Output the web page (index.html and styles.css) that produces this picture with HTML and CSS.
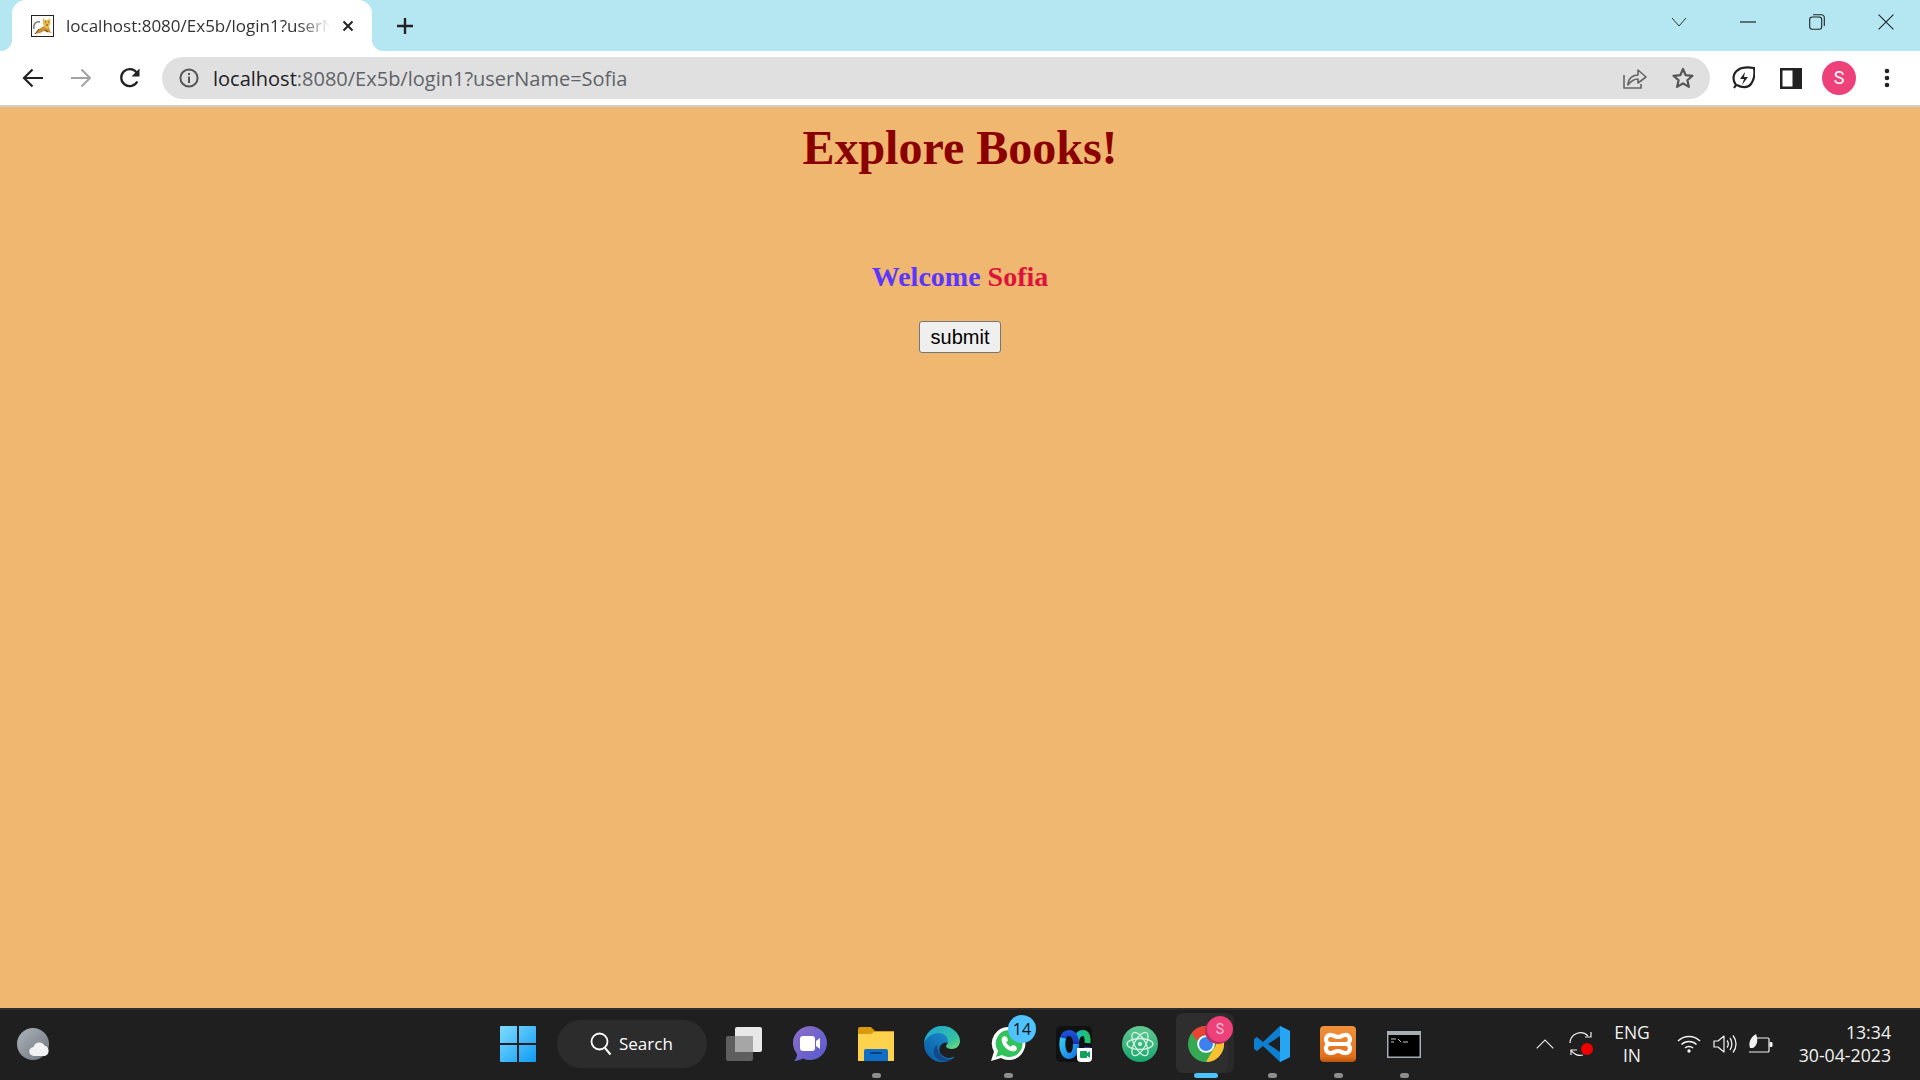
FILE: index.html
```html
<!DOCTYPE html>
<html lang="en">
<head>
<meta charset="utf-8">
<title>Explore Books</title>
<link rel="stylesheet" href="styles.css">
</head>
<body>
<div class="screen">
  <header class="tabstrip">
    <div class="tab">
      <svg class="favicon" width="23" height="22" viewBox="0 0 23 22"><rect x=".5" y=".5" width="22" height="21" fill="#fff" stroke="#222"/><path d="M3 14C2 9 5 6 9 7" fill="none" stroke="#777" stroke-width="1.400"/><path d="M4 19l4-5 5-3 5 1 1 4 2 2-5-1-3-1-4 2z" fill="#c98f33"/><path d="M12 3l2 2h3l2-2 .5 5-2.500 6-3-1-2-4z" fill="#e8b94a"/><path d="M14 7h1M17 7h1M15 10h2" stroke="#6a4a14" stroke-width="1"/><path d="M8 14l-4 5M14 15l3 2" stroke="#5a3d10" stroke-width="1"/></svg>
      <span class="tab-title">localhost:8080/Ex5b/login1?userN</span>
      <svg class="tab-close" width="12" height="12" viewBox="0 0 12 12"><path d="M1.500 1.500l9 9M10.500 1.500l-9 9" stroke="#222" stroke-width="2" fill="none"/></svg>
    </div>
    <svg class="new-tab" width="18" height="18" viewBox="0 0 18 18"><path d="M9 1v16M1 9h16" stroke="#222" stroke-width="2.400" fill="none"/></svg>
    <div class="win-controls">
      <span class="win-btn"><svg width="16" height="10" viewBox="0 0 16 10"><path d="M1 1l7 8 7-8" fill="none" stroke="#333" stroke-width="1"/></svg></span>
      <span class="win-btn"><svg width="16" height="2" viewBox="0 0 16 2"><path d="M0 1h16" stroke="#222" stroke-width="1.200"/></svg></span>
      <span class="win-btn"><svg width="16" height="16" viewBox="0 0 16 16"><rect x=".7" y="3" width="12" height="12.300" rx="2.500" fill="none" stroke="#222" stroke-width="1.100"/><path d="M4 .8h8.500a2.800 2.800 0 0 1 2.800 2.800V12" fill="none" stroke="#222" stroke-width="1.100"/></svg></span>
      <span class="win-btn"><svg width="16" height="16" viewBox="0 0 16 16"><path d="M.6.6l14.800 14.800M15.400.6L.6 15.400" stroke="#222" stroke-width="1.100" fill="none"/></svg></span>
    </div>
  </header>

  <nav class="toolbar">
    <div class="nav-group">
      <span class="tool"><svg width="22" height="20" viewBox="0 0 22 20"><path d="M21 10H2M10.500 1.500L2 10l8.500 8.500" fill="none" stroke="#222" stroke-width="2.200"/></svg></span>
      <span class="tool tool-fwd"><svg width="22" height="20" viewBox="0 0 22 20"><path d="M1 10h19M11.500 1.500L20 10l-8.500 8.500" fill="none" stroke="#a3a3a3" stroke-width="2"/></svg></span>
      <span class="tool"><svg width="22" height="22" viewBox="0 0 22 22"><path d="M18.300 14.500A8.500 8.500 0 1 1 17.500 5.400" fill="none" stroke="#222" stroke-width="2.300"/><path d="M20.500 1.500v8h-8z" fill="#222"/></svg></span>
    </div>
    <div class="omnibox">
      <svg class="info" width="20" height="20" viewBox="0 0 20 20"><circle cx="10" cy="10" r="8.600" fill="none" stroke="#555" stroke-width="2"/><path d="M10 8.500V15M10 5v2" stroke="#555" stroke-width="2" fill="none"/></svg>
      <span class="url"><span class="url-host">localhost</span>:8080/Ex5b/login1?userName=Sofia</span>
      <svg class="omni-share" width="24" height="23" viewBox="0 0 24 23"><path d="M1 9v13h17v-4" fill="none" stroke="#666" stroke-width="1.600"/><path d="M5 19c0-6 4-10 10-10V4l8 7-8 6v-4c-4 0-7 2-10 6z" fill="none" stroke="#666" stroke-width="1.600" stroke-linejoin="round"/></svg>
      <svg class="omni-star" width="22" height="22" viewBox="0 0 22 22"><path d="M11 2l2.700 6.200 6.800.6-5.100 4.500 1.500 6.600L11 16.400l-5.900 3.500 1.500-6.600L1.500 8.800l6.800-.6z" fill="none" stroke="#555" stroke-width="2.200" stroke-linejoin="round"/></svg>
    </div>
    <div class="ext-group">
      <span class="ext"><svg width="23" height="24" viewBox="0 0 23 24"><path d="M2 22l2-3C0 14 1 7 6 4c4-3 10-3 16-2 1 6 0 12-3 16-3 4-9 4-14 1" fill="none" stroke="#222" stroke-width="2.200"/><path d="M13 6l-5 7h4l-2 6 6-8h-4z" fill="#222"/></svg></span>
      <span class="ext"><svg width="22" height="21" viewBox="0 0 22 21"><rect width="22" height="21" fill="#222"/><rect x="2.500" y="2.500" width="10" height="16" fill="#fff"/></svg></span>
      <span class="ext"><span class="avatar">S</span></span>
      <span class="ext"><svg width="6" height="20" viewBox="0 0 6 20"><circle cx="3" cy="3" r="2.300" fill="#222"/><circle cx="3" cy="10" r="2.300" fill="#222"/><circle cx="3" cy="17" r="2.300" fill="#222"/></svg></span>
    </div>
  </nav>

  <main class="page">
    <h1 class="title">Explore Books!</h1>
    <h2 class="welcome">Welcome <span class="name">Sofia</span></h2>
    <button class="submit" type="button">submit</button>
  </main>

  <footer class="taskbar">
    <div class="tb-left">
      <svg width="34" height="32" viewBox="0 0 34 32"><defs><linearGradient id="wx" x1="0" y1="0" x2="1" y2="1"><stop offset="0" stop-color="#aeb4bb"/><stop offset="1" stop-color="#6d747c"/></linearGradient></defs><circle cx="16" cy="16" r="16" fill="url(#wx)"/><path d="M17 28a4.500 4.500 0 0 1-.500-9 6 6 0 0 1 11-1.500A5.500 5.500 0 0 1 28 28z" fill="#f1f2f4"/></svg>
    </div>
    <div class="tb-center">
      <span class="cell"><svg width="36" height="36" viewBox="0 0 36 36"><defs><linearGradient id="win" x1="0" y1="0" x2="1" y2="1"><stop offset="0" stop-color="#7fdcff"/><stop offset="1" stop-color="#0f9bf5"/></linearGradient></defs><path d="M0 1a1 1 0 0 1 1-1h16v17H0zM19 0h16a1 1 0 0 1 1 1v16H19zM0 19h17v17H1a1 1 0 0 1-1-1zM19 19h17v16a1 1 0 0 1-1 1H19z" fill="url(#win)"/></svg></span>
      <span class="search"><svg width="22" height="24" viewBox="0 0 22 24"><circle cx="9.500" cy="9.500" r="8" fill="none" stroke="#fff" stroke-width="1.800"/><path d="M15 16l5.500 6.500" stroke="#fff" stroke-width="2"/></svg><span class="search-text">Search</span></span>
      <span class="cell"><svg width="36" height="34" viewBox="0 0 36 34"><rect y="9" width="27" height="25" rx="2" fill="#5e5e5e"/><rect x="9" width="27" height="25" rx="2" fill="#e8e8e8"/><rect x="9" y="9" width="18" height="16" fill="#a6a6a6"/></svg></span>
      <span class="cell"><svg width="34" height="36" viewBox="0 0 34 36"><defs><linearGradient id="meet" x1="0" y1="0" x2="1" y2="1"><stop offset="0" stop-color="#8d6fc7"/><stop offset="1" stop-color="#5559d0"/></linearGradient></defs><path d="M17 0a17 17 0 1 1-7 32.500C7 34 4 35 1 35c2-2 3-4 3-7A17 17 0 0 1 17 0z" fill="url(#meet)"/><rect x="7" y="10" width="15" height="15" rx="3" fill="#fff"/><path d="M23 15l4-3v11l-4-3z" fill="#fff"/></svg></span>
      <span class="cell running"><svg width="36" height="34" viewBox="0 0 36 34"><path d="M0 2a2 2 0 0 1 2-2h11l4 4h19v30H0z" fill="#d99a0e"/><path d="M0 7h13l3-2h20v28a1 1 0 0 1-1 1H1a1 1 0 0 1-1-1z" fill="#ffd24d"/><path d="M6 34V24a2 2 0 0 1 2-2h20a2 2 0 0 1 2 2v10z" fill="#0f6ec5"/><rect x="12" y="25" width="12" height="2" rx="1" fill="#0a3f80"/></svg></span>
      <span class="cell"><svg width="36" height="36" viewBox="0 0 36 36"><defs><linearGradient id="edgeA" x1="0" y1="1" x2="1" y2="0"><stop offset="0" stop-color="#0c59a4"/><stop offset="1" stop-color="#1e9ad8"/></linearGradient><linearGradient id="edgeB" x1="0" y1="0" x2="1" y2="1"><stop offset="0" stop-color="#1ba5d8"/><stop offset=".7" stop-color="#35c1a1"/><stop offset="1" stop-color="#7ce36b"/></linearGradient></defs><path d="M18 0a18 18 0 1 0 9 33.600c2-1 3-2 3.500-3-4 2-9 2-12-1-4-3-4-8-1-11 2-2 5-3 8-1 3 1 8 1 10-2A18 18 0 0 0 18 0z" fill="url(#edgeA)"/><path d="M0 16C2 7 9 0 18 0c11 0 18 8 18 15 0 5-4 8-8 8-3 0-6-1-6-3 0-1 2-2 2-5 0-5-5-8-10-8C9 7 3 11 0 16z" fill="url(#edgeB)"/><path d="M13 19c0 8 6 15 14 14-6 4-15 2-17-5-1-4 0-7 3-9z" fill="#114a8b"/></svg></span>
      <span class="cell running"><span class="wa"><svg width="36" height="36" viewBox="0 0 36 36"><path d="M19 1a16.500 16.500 0 1 1-8 31L1 35l3-9.500A16.500 16.500 0 0 1 19 1z" fill="#fff"/><path d="M19 4a13.500 13.500 0 1 1-7 25l-6 2 2-6A13.500 13.500 0 0 1 19 4z" fill="#32c25a"/><path d="M14 10c-2 1-3 3-2 6 1 4 5 8 9 9 3 1 5 0 6-2l-1-3-4-1-1 2c-2-1-4-3-5-5l2-1-1-4z" fill="#fff"/></svg><span class="badge">14</span></span></span>
      <span class="cell"><svg width="36" height="36" viewBox="0 0 36 36"><defs><linearGradient id="wb1" x1="0" y1="0" x2="0" y2="1"><stop offset="0" stop-color="#1d4fd8"/><stop offset="1" stop-color="#1a2fb0"/></linearGradient><linearGradient id="wb2" x1="0" y1="0" x2="1" y2="1"><stop offset="0" stop-color="#32c8ef"/><stop offset="1" stop-color="#1677e8"/></linearGradient><linearGradient id="wb3" x1="0" y1="0" x2="1" y2="0"><stop offset="0" stop-color="#14b4c8"/><stop offset="1" stop-color="#22c46a"/></linearGradient></defs><rect width="36" height="36" rx="5" fill="#111"/><path d="M20 18c0 6 1 10 5 10s6-3 6.500-7" fill="none" stroke="url(#wb1)" stroke-width="6"/><path d="M20 18c0-7 3-11 7-11s5 5 4.500 10" fill="none" stroke="url(#wb3)" stroke-width="6"/><path d="M7 14c0-5 3-7 6-7 5 0 7 5 7 11" fill="none" stroke="url(#wb1)" stroke-width="6"/><path d="M7 12c-2 10 1 18 6 18s7-6 7-12" fill="none" stroke="url(#wb2)" stroke-width="6"/><path d="M21 22h15v10a4 4 0 0 1-4 4H25a4 4 0 0 1-4-4z" fill="#fff"/><rect x="24" y="25" width="7" height="7" rx="1" fill="#12a05c"/><path d="M31 27l3-2v7l-3-2z" fill="#12a05c"/></svg></span>
      <span class="cell"><svg width="36" height="36" viewBox="0 0 36 36"><defs><linearGradient id="atom" x1="0" y1="0" x2="0" y2="1"><stop offset="0" stop-color="#63c893"/><stop offset="1" stop-color="#17a56c"/></linearGradient></defs><circle cx="18" cy="18" r="18" fill="url(#atom)"/><g fill="none" stroke="#d6f3e3" stroke-width="1.300"><ellipse cx="18" cy="18" rx="13" ry="5.500"/><ellipse cx="18" cy="18" rx="13" ry="5.500" transform="rotate(60 18 18)"/><ellipse cx="18" cy="18" rx="13" ry="5.500" transform="rotate(120 18 18)"/></g><circle cx="18" cy="18" r="2" fill="#d6f3e3"/></svg></span>
      <span class="cell active"><span class="chrome"><svg width="36" height="36" viewBox="0 0 36 36"><circle cx="18" cy="18" r="18" fill="#34a853"/><path d="M18 0a18 18 0 0 1 15.600 9H18a9 9 0 0 0-8.500 6L3.500 7.200A18 18 0 0 1 18 0z" fill="#ea4335"/><path d="M33.600 9A18 18 0 0 1 18 36l7.800-13.500A9 9 0 0 0 25 9z" fill="#fbc02d"/><circle cx="18" cy="18" r="8.800" fill="#fff"/><circle cx="18" cy="18" r="7" fill="#3b82f0"/></svg><span class="chrome-badge">S</span></span></span>
      <span class="cell running"><svg width="36" height="36" viewBox="0 0 36 36"><path d="M26 0l10 5v26l-10 5L9 20l-6 5-3-2v-10l3-2 6 5z" fill="#0e7fcf"/><path d="M26 0l10 5v26l-10 5z" fill="#24a6f2"/><path d="M26 10L14 18l12 8z" fill="#1f1f1f"/></svg></span>
      <span class="cell running"><svg width="36" height="36" viewBox="0 0 36 36"><defs><linearGradient id="xa" x1="0" y1="0" x2="0" y2="1"><stop offset="0" stop-color="#f0903a"/><stop offset=".85" stop-color="#e4701c"/><stop offset="1" stop-color="#b9560f"/></linearGradient></defs><rect width="36" height="36" rx="4" fill="url(#xa)"/><path d="M18 11c-3 0-4-2-7-2a4.500 4.500 0 0 0-1 9 4.500 4.500 0 0 0 1 9c3 0 4-2 7-2s4 2 7 2a4.500 4.500 0 0 0 1-9 4.500 4.500 0 0 0-1-9c-3 0-4 2-7 2zM10 18h16" fill="none" stroke="#fff" stroke-width="4.200" stroke-linejoin="round"/></svg></span>
      <span class="cell running"><svg width="34" height="27" viewBox="0 0 34 27"><rect width="34" height="27" fill="#a6acb3"/><rect x="1.500" y="4" width="31" height="21.500" fill="#000"/><path d="M4 8h5M4 11h3M11 8l3 3M16 11h5" stroke="#c8c8c8" stroke-width="1" fill="none"/></svg></span>
    </div>
    <div class="tray">
      <svg class="tray-chevron" width="18" height="10" viewBox="0 0 18 10"><path d="M.7 9.300L9 1l8.300 8.300" fill="none" stroke="#e8e8e8" stroke-width="1.200"/></svg>
      <svg class="tray-sync" width="26" height="26" viewBox="0 0 26 26"><path d="M1 12A10.500 10.500 0 0 1 19 5" fill="none" stroke="#eee" stroke-width="1.200"/><path d="M22 1v5h-6M2 24v-5h6" fill="none" stroke="#eee" stroke-width="1.200"/><path d="M2 19a10.500 10.500 0 0 0 12 5" fill="none" stroke="#eee" stroke-width="1.200"/><circle cx="18" cy="18" r="6" fill="#f00000"/></svg>
      <div class="lang"><span>ENG</span><span>IN</span></div>
      <svg class="tray-wifi" width="24" height="18" viewBox="0 0 24 18"><path d="M1 6c6-6 16-6 22 0M4.500 9.500c4-4 11-4 15 0M8 13c2-2 6-2 8 0" fill="none" stroke="#f2f2f2" stroke-width="1.500"/><circle cx="12" cy="16" r="1.700" fill="#f2f2f2"/></svg>
      <svg class="tray-vol" width="24" height="20" viewBox="0 0 24 20"><path d="M1 7v6h4l6 5V2L5 7z" fill="none" stroke="#f2f2f2" stroke-width="1.200" stroke-linejoin="round"/><path d="M14 6.500c1.500 2 1.500 5 0 7M17 4c2.500 3.500 2.500 8.500 0 12M20 1.500c4 5 4 12 0 17" fill="none" stroke="#f2f2f2" stroke-width="1.300"/></svg>
      <svg class="tray-batt" width="25" height="20" viewBox="0 0 25 20"><path d="M8 4h12a1 1 0 0 1 1 1v12a1 1 0 0 1-1 1H1" fill="none" stroke="#f2f2f2" stroke-width="1.200"/><rect x="21.500" y="8" width="3" height="5" rx="1" fill="#f2f2f2"/><path d="M2 14C0 8 3 3 8 0c2 5 2 11-3 14z" fill="#f2f2f2"/></svg>
      <div class="clock"><span>13:34</span><span>30-04-2023</span></div>
    </div>
  </footer>
</div>
</body>
</html>
```

FILE: styles.css
```css
* { box-sizing: border-box; }
html, body { margin: 0; padding: 0; height: 100%; overflow: hidden; }
body { font-family: "Open Sans", "Noto Sans", sans-serif; }

.screen { width: 1920px; height: 1080px; display: flex; flex-direction: column; }

/* Tab strip */
.tabstrip { height: 51px; background: #b5e7f3; display: flex; align-items: center; flex: none; }
.tab {
  position: relative;
  width: 360px; height: 51px; margin-left: 12px;
  background: #fff; border-radius: 14px 14px 0 0;
  display: flex; align-items: center; padding-left: 19px;
}
.tab::before, .tab::after {
  content: ""; position: absolute; bottom: 0; width: 12px; height: 12px;
}
.tab::before { left: -12px; background: radial-gradient(circle at 0 0, transparent 12px, #fff 12.500px); }
.tab::after { right: -12px; background: radial-gradient(circle at 100% 0, transparent 12px, #fff 12.500px); }
.favicon { flex: none; }
.tab-title {
  width: 264px; margin-left: 12px; font-size: 17px; color: #333; white-space: nowrap; flex: none;
  -webkit-mask-image: linear-gradient(90deg, #000 88%, transparent 100%);
  mask-image: linear-gradient(90deg, #000 88%, transparent 100%);
}
.tab-close { margin-left: 12px; flex: none; }
.new-tab { margin-left: 24px; flex: none; }
.win-controls { margin-left: auto; display: flex; align-items: center; height: 42px; margin-top: -8px; }
.win-btn { width: 69px; display: flex; justify-content: center; align-items: center; }

/* Toolbar */
.toolbar { height: 56px; background: #fff; border-bottom: 2px solid #cfcfcf; display: flex; align-items: flex-start; flex: none; padding-top: 6px; }
.nav-group { display: flex; padding-left: 9px; width: 162px; height: 42px; }
.tool { width: 48.500px; display: flex; align-items: center; justify-content: center; }
.tool-fwd svg { margin-left: -1px; }
.omnibox { width: 1548px; height: 42px; background: #e0e0e0; border-radius: 21px; display: flex; align-items: center; padding-left: 17px; }
.info { flex: none; }
.url { margin-left: 14px; font-size: 20px; color: #5f6368; white-space: nowrap; }
.url-host { color: #202124; }
.omni-share { margin-left: auto; margin-top: -2px; flex: none; }
.omni-star { margin-left: 25px; margin-right: 16px; flex: none; }
.ext-group { display: flex; margin-left: 9px; height: 42px; }
.ext { width: 48px; display: flex; align-items: center; justify-content: center; }
.avatar { width: 34px; height: 34px; border-radius: 50%; background: #ee4079; color: #fff; font: 18px/34px "Roboto", sans-serif; text-align: center; }

/* Page */
.page { flex: 1; background: #efb76f; text-align: center; font-family: "Liberation Serif", serif; padding-top: 13px; }
.title { margin: 0; font-size: 48px; line-height: 55px; font-weight: 700; color: #8b0000; }
.welcome { margin: 86px 0 28px; font-size: 28px; line-height: 32px; font-weight: 700; color: #5a36ff; }
.name { color: #dc143c; }
.submit {
  display: block; margin: 0 auto; width: 82px; height: 32px; padding: 0;
  font: 20px "Liberation Sans", sans-serif; color: #000;
  background: #efefef; border: 1px solid #767676; border-radius: 3px;
}

/* Taskbar */
.taskbar { height: 72px; flex: none; background: #1f1f1f; border-top: 2px solid #2b2b2b; display: flex; align-items: center; }
.tb-left { width: 485px; padding-left: 17px; display: flex; align-items: center; flex: none; margin-top: -2px; }
.tb-center { display: flex; align-items: center; flex: none; height: 100%; }
.cell { position: relative; width: 66px; height: 100%; display: flex; align-items: center; justify-content: center; flex: none; margin-top: -2px; }
.running::after {
  content: ""; position: absolute; left: 50%; bottom: 1px; width: 9px; height: 5px; margin-left: -4.500px;
  border-radius: 3px; background: #8d8d8d;
}
.search { width: 150px; height: 48px; margin: -3px 4px 0 6px; border-radius: 24px; background: #2c2c2c; display: flex; align-items: center; padding-left: 33px; color: #fff; font-size: 17px; flex: none; }
.search-text { margin-left: 7px; }
.wa, .chrome { position: relative; display: block; width: 36px; height: 36px; }
.badge {
  position: absolute; top: -11px; right: -10px; width: 28px; height: 28px; border-radius: 50%;
  background: #4fc3ff; color: #111; font-size: 16px; line-height: 28px; text-align: center;
}
.active::before {
  content: ""; position: absolute; left: 3px; top: 4px; width: 52px; height: 60px;
  border-radius: 7px; background: #2e2e2e; box-shadow: 6px 0 0 #292929;
}
.active::after {
  content: ""; position: absolute; left: 50%; bottom: 1px; width: 24px; height: 5px; margin-left: -12px;
  border-radius: 3px; background: #4cc2ff;
}
.chrome { z-index: 1; }
.chrome-badge {
  position: absolute; top: -10px; right: -9px; width: 26px; height: 26px; border-radius: 50%;
  background: #ee4079; color: #f7c4d6; font: 14px/26px "Roboto", sans-serif; text-align: center;
  box-shadow: -2px 2px 0 #b8305f;
}

.tray { flex: 1; display: flex; align-items: center; color: #f2f2f2; padding-left: 99px; height: 100%; margin-top: -2px; }
.tray-chevron { flex: none; }
.tray-sync { margin-left: 15px; flex: none; }
.lang { width: 50px; margin-left: 12px; display: flex; flex-direction: column; align-items: center; font-size: 17.500px; line-height: 23px; }
.tray-wifi { margin-left: 20px; flex: none; }
.tray-vol { margin-left: 12px; flex: none; }
.tray-batt { margin-left: 11px; flex: none; }
.clock { margin-left: auto; margin-right: 29px; display: flex; flex-direction: column; align-items: flex-end; font-size: 17.700px; line-height: 23px; }
```
